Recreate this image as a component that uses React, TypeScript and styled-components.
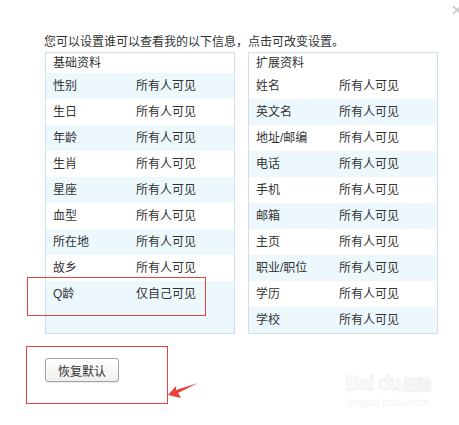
import styled, { createGlobalStyle } from 'styled-components';

const GlobalStyle = createGlobalStyle`
  html, body {
    margin: 0;
    padding: 0;
    background: #fff;
    overflow: hidden;
  }
  body {
    font-family: "Liberation Sans", "Noto Sans CJK SC", sans-serif;
    font-size: 12px;
    color: #333;
  }
`;

const Page = styled.div`
  position: relative;
  width: 459px;
  height: 425px;
  padding: 33px 0 0 44px;
  box-sizing: border-box;
`;

const Close = styled.svg`
  position: absolute;
  top: 5px;
  left: 452px;
`;

const Intro = styled.div`
  line-height: 18px;
  height: 19px;
  font-size: 12px;
  color: #333;
`;

const Panels = styled.div`
  display: flex;
  gap: 13px;
  margin-left: 1px;
`;

const Panel = styled.div`
  width: 190px;
  box-sizing: border-box;
  border: 1px solid #cfe0ea;
  background: #edf8fd;
`;

const PanelHead = styled.div`
  height: 20px;
  line-height: 20px;
  padding-left: 7px;
  background: #fff;
`;

const Row = styled.div<{ $shade: boolean }>`
  display: flex;
  height: 26px;
  line-height: 26px;
  padding-left: 7px;
  background: ${(p) => (p.$shade ? '#edf8fd' : '#fff')};
`;

const Label = styled.span`
  width: 83px;
  flex: none;
`;

const Value = styled.span`
  flex: auto;
`;

const Footer = styled.div`
  padding: 24px 0 0 1px;
`;

const Button = styled.button`
  width: 74px;
  height: 24px;
  padding: 0;
  border: 1px solid #a3a3a3;
  border-radius: 3px;
  background: linear-gradient(#ffffff, #efefef);
  font-family: "Liberation Sans", "Noto Sans CJK SC", sans-serif;
  font-size: 12px;
  color: #333;
  box-shadow: 0 1px 1px rgba(0, 0, 0, 0.08);
`;

const Mark = styled.div<{ $l: number; $t: number; $w: number; $h: number }>`
  position: absolute;
  left: ${(p) => p.$l}px;
  top: ${(p) => p.$t}px;
  width: ${(p) => p.$w}px;
  height: ${(p) => p.$h}px;
  box-sizing: border-box;
  border: 1px solid #e8403a;
  pointer-events: none;
`;

const Arrow = styled.svg`
  position: absolute;
  left: 164px;
  top: 380px;
`;

const Watermark = styled.div`
  position: absolute;
  left: 343px;
  top: 371px;
  width: 90px;
  text-align: center;
  font-family: "Liberation Sans", sans-serif;
  .logo {
    font-size: 20px;
    font-weight: bold;
    letter-spacing: -1px;
    line-height: 24px;
    -webkit-text-stroke: 1px #f1f1f1;
    color: #fdfdfd;
    white-space: nowrap;
  }
  .logo span {
    font-family: "Noto Sans CJK SC", sans-serif;
    font-size: 15px;
    margin-left: 2px;
  }
  .url {
    font-size: 10px;
    color: #f3f3f3;
    line-height: 14px;
  }
`;

const basic: [string, string][] = [
  ['性别', '所有人可见'],
  ['生日', '所有人可见'],
  ['年龄', '所有人可见'],
  ['生肖', '所有人可见'],
  ['星座', '所有人可见'],
  ['血型', '所有人可见'],
  ['所在地', '所有人可见'],
  ['故乡', '所有人可见'],
  ['Q龄', '仅自己可见'],
];

const extra: [string, string][] = [
  ['姓名', '所有人可见'],
  ['英文名', '所有人可见'],
  ['地址/邮编', '所有人可见'],
  ['电话', '所有人可见'],
  ['手机', '所有人可见'],
  ['邮箱', '所有人可见'],
  ['主页', '所有人可见'],
  ['职业/职位', '所有人可见'],
  ['学历', '所有人可见'],
  ['学校', '所有人可见'],
];

export default () => {
  return (
    <Page>
      <GlobalStyle />
      <Close width="10" height="10" viewBox="0 0 10 10">
        <path d="M1 1 L9 9 M9 1 L1 9" stroke="#c8c8c8" strokeWidth="1.6" />
      </Close>

      <Intro>您可以设置谁可以查看我的以下信息，点击可改变设置。</Intro>

      <Panels>
        {/* 基础资料 */}
        <Panel>
          <PanelHead>基础资料</PanelHead>
          {basic.map(([k, v], i) => (
            <Row key={k} $shade={i % 2 === 0}>
              <Label>{k}</Label>
              <Value>{v}</Value>
            </Row>
          ))}
        </Panel>

        {/* 扩展资料 */}
        <Panel>
          <PanelHead>扩展资料</PanelHead>
          {extra.map(([k, v], i) => (
            <Row key={k} $shade={i % 2 === 1}>
              <Label>{k}</Label>
              <Value>{v}</Value>
            </Row>
          ))}
        </Panel>
      </Panels>

      <Footer>
        <Button>恢复默认</Button>
      </Footer>

      {/* 标注 */}
      <Mark $l={27} $t={277} $w={179} $h={39} />
      <Mark $l={26} $t={346} $w={142} $h={58} />
      <Arrow width="40" height="22" viewBox="0 0 40 22">
        <polygon points="4,15 12,6 12,10 34,3 14,13 17,18" fill="#e8403a" />
      </Arrow>

      <Watermark>
        <div className="logo">
          Bai du<span>经验</span>
        </div>
        <div className="url">jingyan.baidu.com</div>
      </Watermark>
    </Page>
  );
};
